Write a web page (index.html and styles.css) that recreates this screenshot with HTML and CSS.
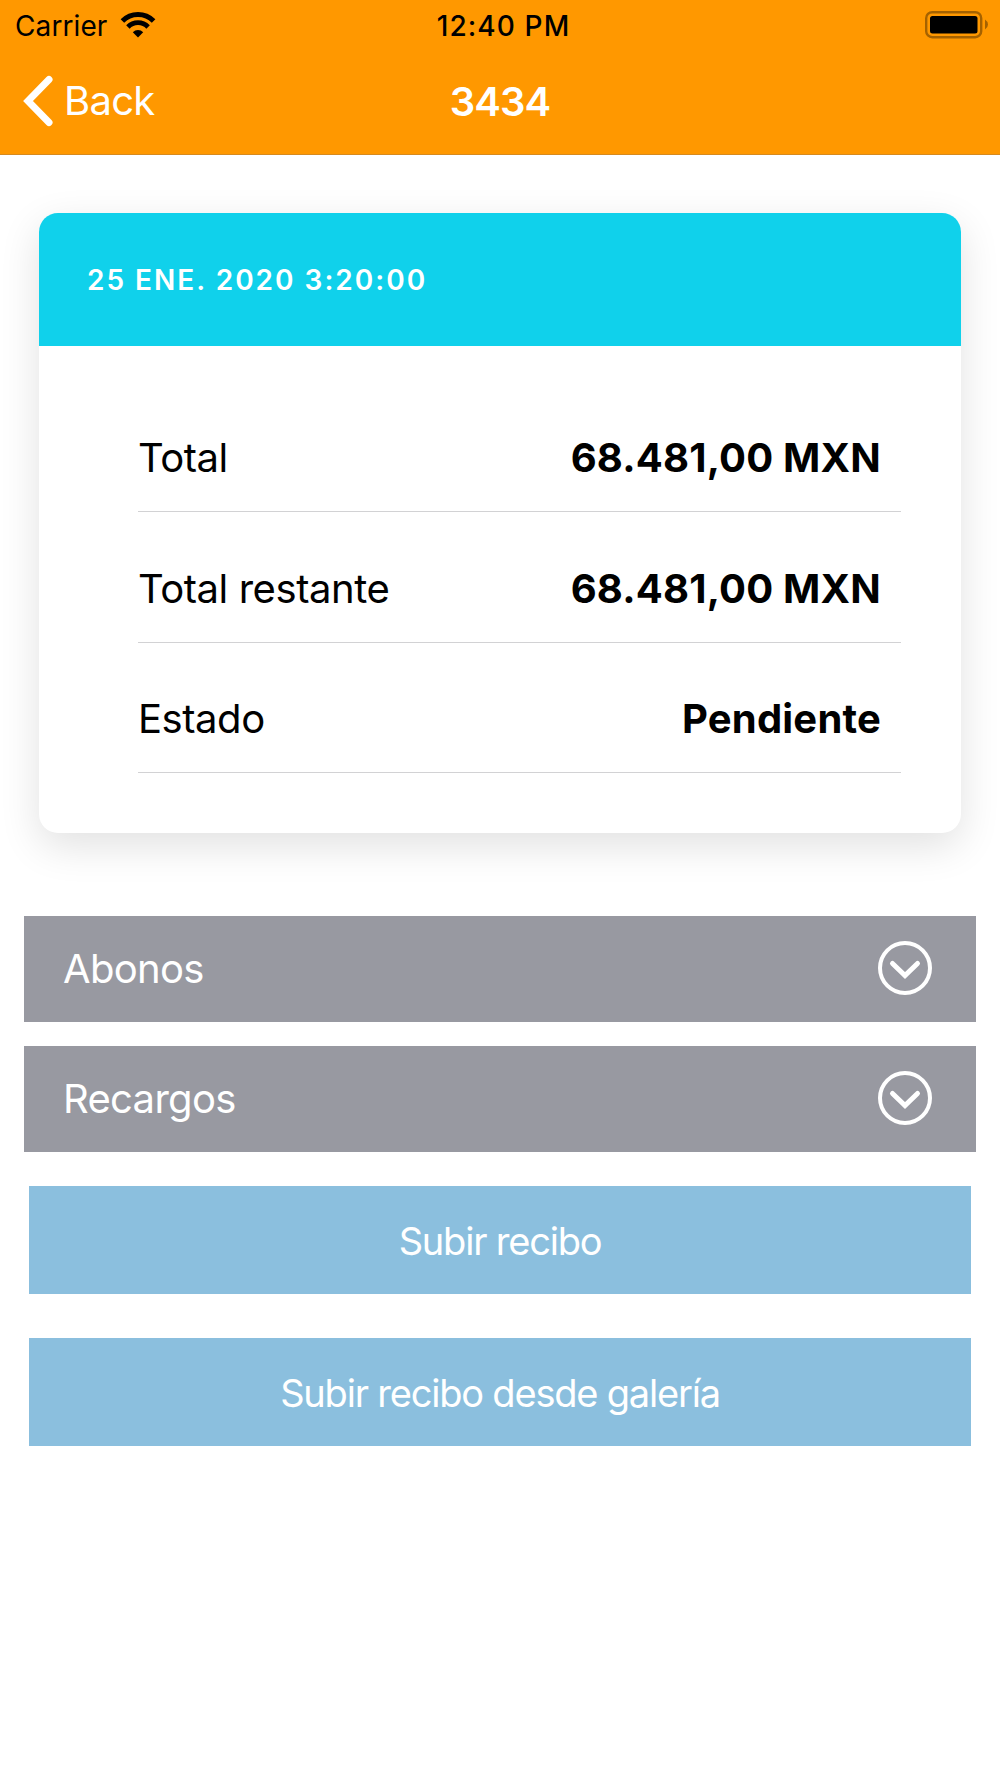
FILE: index.html
```html
<!DOCTYPE html>
<html lang="es">
<head>
  <meta charset="UTF-8" />
  <meta name="viewport" content="width=device-width, initial-scale=1.0" />
  <title>3434</title>
  <link rel="stylesheet" href="styles.css">
</head>
<body>
  <header>
    <div class="status-bar">
      <div class="carrier">
        <span>Carrier</span>
        <svg class="wifi" width="36" height="26" viewBox="0 0 36 26">
          <path d="M2.4 9 A22 22 0 0 1 33.6 9" fill="none" stroke="#000" stroke-width="5"/>
          <path d="M7.9 15 A14 14 0 0 1 28.1 15" fill="none" stroke="#000" stroke-width="4.8"/>
          <path d="M18 25.500 L12.800 20.300 A7.3 7.3 0 0 1 23.200 20.300 Z" fill="#000"/>
        </svg>
      </div>
      <span class="clock">12:40 PM</span>
      <svg class="battery" width="63" height="28" viewBox="0 0 63 28">
        <rect x="1.200" y="1.200" width="55" height="25" rx="6" fill="none" stroke="#a56200" stroke-width="2.400"/>
        <rect x="5" y="5" width="47.500" height="17.500" rx="2.500" fill="#000"/>
        <path d="M60 8.500 Q63 10.500 63 13.500 Q63 16.500 60 18.500 Z" fill="#a56200"/>
      </svg>
    </div>
    <nav class="nav-bar">
      <a class="back">
        <svg width="30" height="52" viewBox="0 0 30 52">
          <path d="M26 4.500 L5 26 L26 47.500" fill="none" stroke="#fff" stroke-width="7" stroke-linecap="round"/>
        </svg>
        <span>Back</span>
      </a>
      <h1>3434</h1>
    </nav>
  </header>

  <main>
    <section class="card">
      <div class="card-header">25 ENE. 2020 3:20:00</div>
      <div class="card-body">
        <div class="row"><span>Total</span><b>68.481,00 MXN</b></div>
        <div class="row"><span>Total restante</span><b>68.481,00 MXN</b></div>
        <div class="row"><span>Estado</span><b>Pendiente</b></div>
      </div>
    </section>

    <section class="accordion">
      <div class="panel">
        <span>Abonos</span>
        <svg width="54" height="54" viewBox="0 0 54 54">
          <circle cx="27" cy="27" r="25" />
          <path d="M14.500 22.500 L27 34.500 L39.500 22.500" />
        </svg>
      </div>
      <div class="panel">
        <span>Recargos</span>
        <svg width="54" height="54" viewBox="0 0 54 54">
          <circle cx="27" cy="27" r="25" />
          <path d="M14.500 22.500 L27 34.500 L39.500 22.500" />
        </svg>
      </div>
    </section>

    <div class="actions">
      <button type="button">Subir recibo</button>
      <button type="button">Subir recibo desde galería</button>
    </div>
  </main>
</body>
</html>
```
FILE: styles.css
```css
* {
  box-sizing: border-box;
}
body {
  font-family: Inter, "Liberation Sans", sans-serif;
  background-color: #fff;
  color: #000;
  margin: 0;
  font-size: 40px;
}
header {
  height: 155px;
  background-color: #ff9800;
  border-bottom: 1px solid #d68a20;
}
.status-bar {
  display: grid;
  grid-template-columns: 1fr auto 1fr;
  align-items: center;
  height: 51px;
  padding: 0 12px 0 15px;
  font-size: 28px;
}
.carrier {
  display: flex;
  align-items: center;
  gap: 13px;
  letter-spacing: 0.1px;
}
.wifi {
  margin-top: -2px;
}
.clock {
  padding-left: 4px;
  font-weight: 500;
  letter-spacing: 1.1px;
}
.battery {
  justify-self: end;
  margin-top: -2px;
}
.nav-bar {
  display: grid;
  grid-template-columns: 1fr auto 1fr;
  align-items: center;
  height: 100px;
  padding: 0 23px;
  color: #fff;
}
.back {
  display: flex;
  align-items: center;
  gap: 11px;
  letter-spacing: -0.75px;
}
.back span {
  padding-bottom: 2px;
}
h1 {
  margin: 0;
  font-size: 40px;
  font-weight: 600;
  letter-spacing: -0.9px;
}
.card {
  margin: 58px 39px 0;
  height: 620px;
  border-radius: 19px;
  background-color: #fff;
  box-shadow: 0 13px 40px rgba(0,0,0,0.12);
  overflow: hidden;
}
.card-header {
  display: flex;
  align-items: center;
  height: 132.500px;
  padding: 1px 48px 0;
  background-color: #10d1eb;
  color: #fff;
  font-size: 28px;
  font-weight: 600;
  letter-spacing: 2px;
}
.card-body {
  padding: 36px 60px 0 99px;
}
.row {
  display: flex;
  justify-content: space-between;
  align-items: center;
  height: 130.500px;
  padding: 23px 20px 0 0;
  border-bottom: 1px solid #d2d2d4;
  letter-spacing: -0.45px;
}
.row b {
  letter-spacing: 0.2px;
}
.accordion {
  display: flex;
  flex-direction: column;
  gap: 24px;
  margin: 83px 24px 0;
}
.panel {
  display: flex;
  justify-content: space-between;
  align-items: center;
  height: 106px;
  padding: 0 44px 2px 39px;
  background-color: #9899a1;
  color: #fff;
  letter-spacing: -0.7px;
}
.panel svg {
  fill: none;
  stroke: #fff;
  stroke-width: 4;
  stroke-linecap: round;
}
.panel path {
  stroke-width: 5;
}
.actions {
  display: flex;
  flex-direction: column;
  gap: 43.500px;
  margin: 34px 29px 0;
}
button {
  height: 108px;
  padding: 2px 0 0;
  border: none;
  background-color: #8bbfde;
  color: #fff;
  font-family: inherit;
  font-size: 38px;
  letter-spacing: -1.2px;
}
```
